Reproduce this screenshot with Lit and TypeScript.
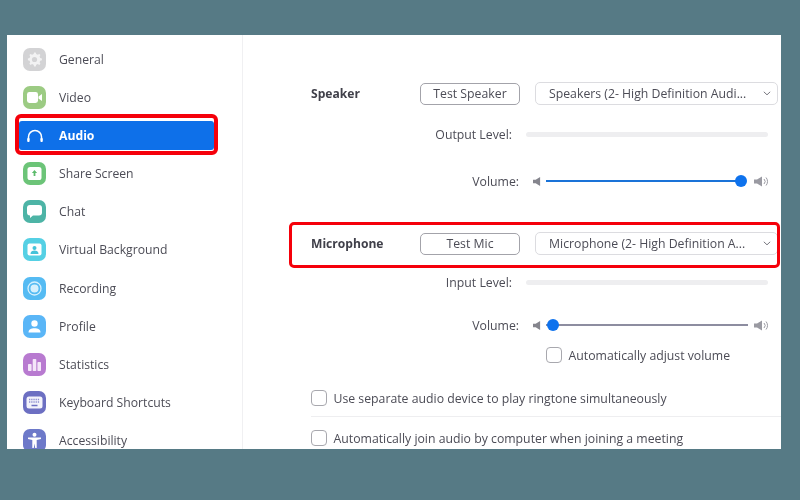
import { LitElement, html, css, svg } from "lit";
import { customElement } from "lit/decorators.js";

const gearPath = "M12 6.2l1.5 0 .5 1.7 1.5.6 1.6-.8 1.1 1.1-.8 1.6.6 1.5 1.7.5v1.6l-1.7.5-.6 1.5.8 1.6-1.1 1.1-1.6-.8-1.5.6-.5 1.7h-1.6l-.5-1.7-1.5-.6-1.6.8-1.1-1.1.8-1.6-.6-1.5-1.7-.5v-1.6l1.7-.5.6-1.5-.8-1.6 1.1-1.1 1.6.8 1.5-.6.5-1.7z";

const items = [
  { name: "General", color: "#d3d3d5", glyph: svg`<path d=${gearPath} transform="translate(-.8 -1.8)" fill="#f2f2f3"/><circle cx="11.5" cy="11.5" r="2.6" fill="#d3d3d5"/>` },
  { name: "Video", color: "#9ccb83", glyph: svg`<rect x="4" y="6" width="11" height="11" rx="2.4" fill="#fff"/><path d="M15.5 10.5l3.500-2.600v7.200l-3.500-2.600z" fill="#fff"/>` },
  { name: "Audio", color: "", glyph: svg`<path d="M5.500 16v-3a6.500 6.500 0 0 1 13 0v3" fill="none" stroke="#fff" stroke-width="1.500"/><rect x="4.200" y="14" width="2.400" height="4" rx="1" fill="#fff"/><rect x="17.400" y="14" width="2.400" height="4" rx="1" fill="#fff"/>` },
  { name: "Share Screen", color: "#6cc478", glyph: svg`<rect x="4.500" y="5" width="14" height="13" rx="2.600" fill="#fff"/><path d="M11.500 8l2.600 3h-1.700v3h-1.800v-3H8.900z" fill="#5cbb6c"/>` },
  { name: "Chat", color: "#4db4a6", glyph: svg`<path d="M7 5h9a3 3 0 0 1 3 3v4.500a3 3 0 0 1-3 3h-6l-3 2.500v-2.500a3 3 0 0 1-3-3V8a3 3 0 0 1 3-3z" fill="#fff"/>` },
  { name: "Virtual Background", color: "#55d0e4", glyph: svg`<rect x="4.500" y="5.500" width="14" height="12" rx="2" fill="#fff"/><circle cx="11.500" cy="10" r="2" fill="#45c3d9"/><path d="M7.500 16c0-2.400 2-3.400 4-3.400s4 1 4 3.400z" fill="#45c3d9"/>` },
  { name: "Recording", color: "#55bbf3", glyph: svg`<circle cx="11.500" cy="11.500" r="6.500" fill="none" stroke="#d6f0fd" stroke-width="1.300"/><circle cx="11.500" cy="11.500" r="4" fill="#d6f0fd"/>` },
  { name: "Profile", color: "#5ab6f7", glyph: svg`<circle cx="11.500" cy="8.500" r="3.200" fill="#fff"/><path d="M5.500 17.500c0-3 2.500-4.300 6-4.300s6 1.300 6 4.300z" fill="#fff"/>` },
  { name: "Statistics", color: "#b87ad0", glyph: svg`<rect x="5" y="11" width="3.600" height="7" rx=".8" fill="#f4e6f9"/><rect x="9.700" y="6" width="3.600" height="12" rx=".8" fill="#f4e6f9"/><rect x="14.400" y="9" width="3.600" height="9" rx=".8" fill="#f4e6f9"/>` },
  { name: "Keyboard Shortcuts", color: "#6c6fc2", glyph: svg`<rect x="3.500" y="5.500" width="16" height="12" rx="2.500" fill="#f3f3fb"/><path d="M6 8.500h11M6 11h11" stroke="#8d8fd0" stroke-width="1.400" stroke-dasharray="1.300 .9"/><path d="M8.500 14.500h6" stroke="#6c6fc2" stroke-width="1.300"/>` },
  { name: "Accessibility", color: "#6d79c9", glyph: svg`<circle cx="11.500" cy="5.800" r="2" fill="#fff"/><path d="M5 8.500h13v1.600l-4.300 1v8h-1.500l-.7-4.500-.7 4.500H9.300v-8L5 10.100z" fill="#fff"/>` },
];

const quiet = svg`<svg class="spk" width="8" height="11" viewBox="0 0 9 11"><path d="M0 3.500h3l5-3v10l-5-3H0z" fill="#85858d"/></svg>`;
const loud = svg`<svg class="spk" width="15" height="11" viewBox="0 0 15 11"><path d="M0 3.500h3l5-3v10l-5-3H0z" fill="#9a9aa2"/><path d="M10 3a3.500 3.500 0 0 1 0 5M12 1.500a6 6 0 0 1 0 8" fill="none" stroke="#9a9aa2" stroke-width="1"/></svg>`;
const chev = svg`<svg width="8" height="5" viewBox="0 0 8 5"><path d="M.8.800l3.200 3 3.200-3" fill="none" stroke="#77777f" stroke-width="1"/></svg>`;

@customElement("app-root")
export class AppRoot extends LitElement {
  static styles = css`
    :host { display: block; width: 800px; height: 500px; background: #567a85; font-family: "Open Sans", "Noto Sans", sans-serif; color: #4c4c56; overflow: hidden; }
    .win { display: flex; width: 774px; height: 414px; margin-left: 7px; position: relative; top: 35px; background: #fff; overflow: hidden; filter: blur(.4px); }
    .side { width: 236px; flex: none; box-sizing: border-box; border-right: 1px solid #f0f0f2; padding: 10px 0 0 12px; }
    .item { display: flex; align-items: center; height: 29px; margin: 0 28px 9.100px 0; padding-left: 4px; font-size: 12.200px; white-space: nowrap; position: relative; border-radius: 3px; }
    .ic { width: 23px; height: 23px; border-radius: 7px; margin-right: 13px; flex: none; display: block; }
    .item.on { background: #0e70e9; color: #fff; font-weight: 700; }
    .item.on::after { content: ""; position: absolute; inset: -7px -4px -5px -4px; border: 4px solid #f5000a; border-radius: 6px; pointer-events: none; }
    .main { flex: 1; min-width: 0; padding: 47px 3px 0 68px; font-size: 12.270px; white-space: nowrap; }
    .dev { display: grid; grid-template-columns: 109px 100px 243px; align-items: center; height: 23px; position: relative; }
    .dev b { font-weight: 700; color: #40404a; font-size: 12.100px; line-height: 20px; }
    .btn { height: 22px; box-sizing: border-box; border: 1px solid #a3a3aa; border-radius: 5px; display: flex; align-items: center; justify-content: center; }
    .sel { margin-left: 15px; width: 243px; height: 23px; box-sizing: border-box; border: 1px solid #dcdce0; border-radius: 5px; display: flex; align-items: center; justify-content: space-between; padding: 0 6px 0 13px; }
    .dev.mic { margin-top: 41px; }
    .dev.mic::after { content: ""; position: absolute; left: -22px; right: -2px; top: -10px; bottom: -13px; border: 3px solid #f5000a; border-radius: 5px; pointer-events: none; }
    .lvl { display: flex; align-items: center; height: 20px; margin-top: 19px; }
    .lvl.in { margin-top: 17px; }
    .lvl span { width: 201px; text-align: right; margin-right: 14px; flex: none; }
    .lvl i { display: block; width: 242px; height: 5px; border-radius: 3px; background: #eeeef0; }
    .vol { display: flex; align-items: center; height: 20px; margin-top: 27px; }
    .vol.low { margin-top: 23px; }
    .vol > span { width: 208px; text-align: right; margin-right: 14px; flex: none; }
    .spk { flex: none; }
    .slider { width: 208px; flex: none; margin: 0 0 0 5px; }
    .track { height: 2px; position: relative; background: #8d8da0; }
    .track.full { background: #1a73d8; }
    .track u { position: absolute; top: -5.500px; width: 12px; height: 12px; border-radius: 50%; background: #0e72ed; }
    .chk { display: flex; align-items: center; height: 20px; }
    .chk s { width: 14px; height: 14px; border: 1px solid #a8a8ae; border-radius: 4px; margin-right: 6.500px; flex: none; }
    .adj { margin: 10px 0 0 235px; }
    .ring { margin-top: 23px; }
    .sep { height: 1px; background: #eeeef0; margin: 8px -3px 0 0; }
    .join { margin-top: 11px; }
  `;

  private vol(full: boolean) {
    const width = full ? 195 : 202;
    return html`<div class="vol ${full ? "" : "low"}"><span>Volume:</span>${quiet}
      <div class="slider"><div class="track ${full ? "full" : ""}" style="width:${width}px"><u style=${full ? "right:-6px" : "left:1px"}></u></div></div>${loud}</div>`;
  }

  render() {
    return html`<div class="win">
      <nav class="side">
        ${items.map((it) => html`<div class="item ${it.name === "Audio" ? "on" : ""}">
          <svg class="ic" viewBox="0 0 23 23" style=${it.color ? `background:${it.color}` : ""}>${it.glyph}</svg>${it.name}</div>`)}
      </nav>
      <section class="main">
        <div class="dev"><b>Speaker</b><div class="btn">Test Speaker</div><div class="sel">Speakers (2- High Definition Audi...${chev}</div></div>
        <div class="lvl"><span>Output Level:</span><i></i></div>
        ${this.vol(true)}
        <div class="dev mic"><b>Microphone</b><div class="btn">Test Mic</div><div class="sel">Microphone (2- High Definition A...${chev}</div></div>
        <div class="lvl in"><span>Input Level:</span><i></i></div>
        ${this.vol(false)}
        <div class="chk adj"><s></s>Automatically adjust volume</div>
        <div class="chk ring"><s></s>Use separate audio device to play ringtone simultaneously</div>
        <div class="sep"></div>
        <div class="chk join"><s></s>Automatically join audio by computer when joining a meeting</div>
      </section>
    </div>`;
  }
}
